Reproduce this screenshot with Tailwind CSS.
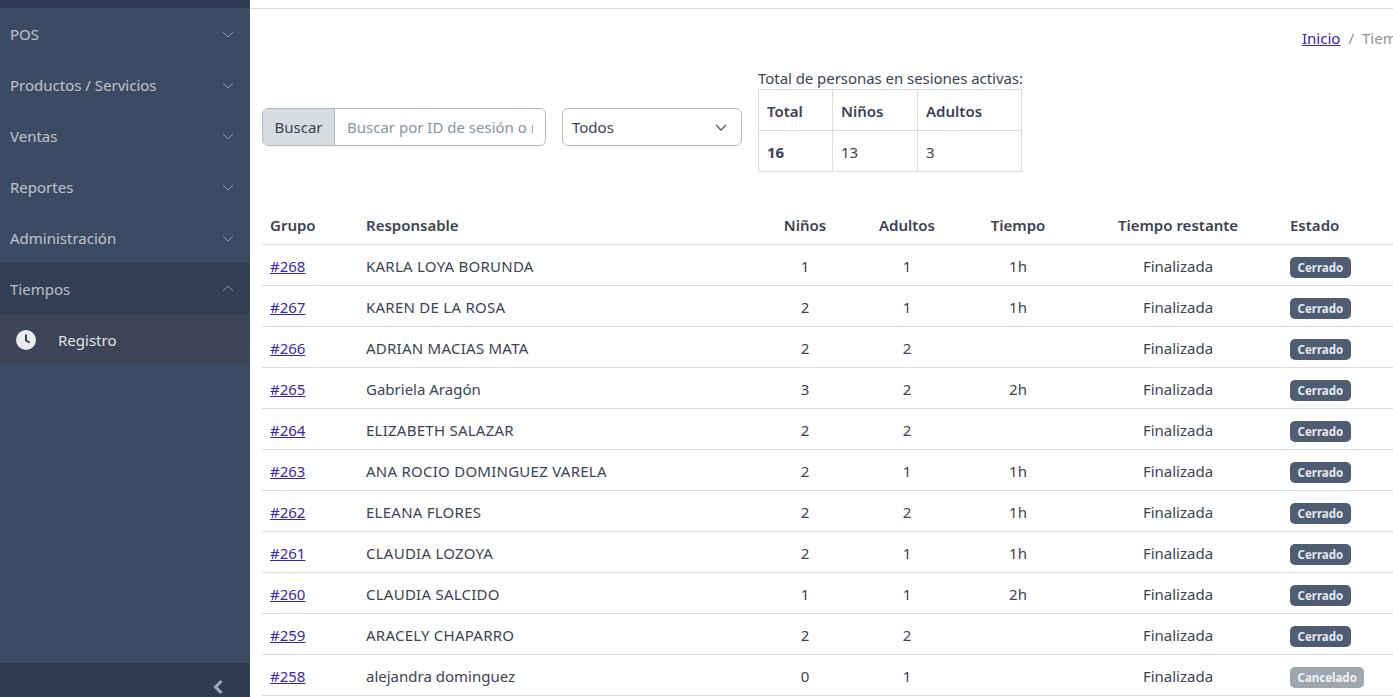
<!DOCTYPE html>
<html lang="es">
<head>
    <meta charset="UTF-8">
    <title>Tiempos</title>
    <script src="https://cdn.jsdelivr.net/npm/@tailwindcss/browser@4"></script>
</head>
<body class="h-[697px] overflow-hidden flex bg-white text-[15px] text-[#3c4352] font-['Noto_Sans',sans-serif]">
    <!-- sidebar -->
    <aside class="w-[250px] shrink-0 h-[697px] flex flex-col bg-[#3c4b64] text-white/65">
        <div class="h-2 bg-[#303c54]"></div>
        <nav class="flex-1">
            <a class="h-[51px] pl-[10px] pr-[10px] pt-[2px] flex items-center justify-between">POS
                <svg class="w-3 h-3 mr-[6px] mb-[2px] text-white/45" viewBox="0 0 12 12" fill="none" stroke="currentColor" stroke-width="1"><path d="M1 4l5 5 5-5"/></svg>
            </a>
            <a class="h-[51px] pl-[10px] pr-[10px] pt-[2px] flex items-center justify-between">Productos / Servicios
                <svg class="w-3 h-3 mr-[6px] mb-[2px] text-white/45" viewBox="0 0 12 12" fill="none" stroke="currentColor" stroke-width="1"><path d="M1 4l5 5 5-5"/></svg>
            </a>
            <a class="h-[51px] pl-[10px] pr-[10px] pt-[2px] flex items-center justify-between">Ventas
                <svg class="w-3 h-3 mr-[6px] mb-[2px] text-white/45" viewBox="0 0 12 12" fill="none" stroke="currentColor" stroke-width="1"><path d="M1 4l5 5 5-5"/></svg>
            </a>
            <a class="h-[51px] pl-[10px] pr-[10px] pt-[2px] flex items-center justify-between">Reportes
                <svg class="w-3 h-3 mr-[6px] mb-[2px] text-white/45" viewBox="0 0 12 12" fill="none" stroke="currentColor" stroke-width="1"><path d="M1 4l5 5 5-5"/></svg>
            </a>
            <a class="h-[51px] pl-[10px] pr-[10px] pt-[2px] flex items-center justify-between">Administración
                <svg class="w-3 h-3 mr-[6px] mb-[2px] text-white/45" viewBox="0 0 12 12" fill="none" stroke="currentColor" stroke-width="1"><path d="M1 4l5 5 5-5"/></svg>
            </a>
            <a class="h-[51px] pl-[10px] pr-[10px] pt-[2px] flex items-center justify-between bg-[#323e54]">Tiempos
                <svg class="w-3 h-3 mr-[6px] mb-[2px] text-white/45" viewBox="0 0 12 12" fill="none" stroke="currentColor" stroke-width="1"><path d="M1 8l5-5 5 5"/></svg>
            </a>
            <a class="h-[51px] pl-[16px] flex items-center bg-[#3b4556] text-white/85">
                <svg class="w-5 h-5 mr-[22px]" viewBox="0 0 20 20"><circle cx="10" cy="10" r="10" fill="#e9ebef"/><path d="M10 4.5v6l3.5 2.2" fill="none" stroke="#3b4556" stroke-width="2"/></svg>
                <span class="pt-[2px]">Registro</span>
            </a>
        </nav>
        <div class="h-[34px] bg-[#303c54] flex justify-end items-end pr-[26px] pb-[2px]">
            <svg class="w-3 h-4" viewBox="0 0 12 16" fill="none" stroke="#a3abb8" stroke-width="3"><path d="M9.5 2l-6 6 6 6"/></svg>
        </div>
    </aside>

    <main class="flex-1 min-w-0 overflow-hidden">
        <div class="h-[9px] border-b border-[#d8dbe0]"></div>
        <!-- breadcrumb -->
        <div class="h-[59px] pl-[1052px] flex items-center whitespace-nowrap">
            <a class="underline text-[#3726b8]">Inicio</a>
            <span class="mx-2 text-[#8d9199]">/</span>
            <span class="text-[#8d9199]">Tiempos</span>
        </div>
        <!-- filters -->
        <div class="pl-3 pt-px flex items-start h-[137px]">
            <div class="flex mt-[39px] w-[284px] h-[38px] border border-[#b1b7c1] rounded-md overflow-hidden">
                <span class="w-[72px] shrink-0 flex items-center justify-center bg-[#d8dbe0] border-r border-[#b1b7c1]">Buscar</span>
                <div class="flex-1 min-w-0 pl-3 pr-3 flex items-center"><span class="block overflow-hidden whitespace-nowrap text-[#8a93a2]">Buscar por ID de sesión o responsable</span></div>
            </div>
            <div class="ml-4 mt-[39px] w-[180px] h-[38px] pl-[9px] pr-[14px] border border-[#b1b7c1] rounded-md flex items-center justify-between">
                Todos
                <svg class="w-3 h-3" viewBox="0 0 12 12" fill="none" stroke="#4f5d73" stroke-width="1.4"><path d="M1 4l5 5 5-5"/></svg>
            </div>
            <div class="ml-4">
                <div class="h-[20px] leading-[19px] whitespace-nowrap tracking-[-0.05px]">Total de personas en sesiones activas:</div>
                <table class="border-collapse table-fixed w-[263px]">
                    <colgroup><col class="w-[74px]"><col class="w-[85px]"><col class="w-[104px]"></colgroup>
                    <tr class="h-[41px]">
                        <th class="border border-[#d8dbe0] px-2 pt-[2px] text-left font-semibold">Total</th>
                        <th class="border border-[#d8dbe0] px-2 pt-[2px] text-left font-semibold">Niños</th>
                        <th class="border border-[#d8dbe0] px-2 pt-[2px] text-left font-semibold">Adultos</th>
                    </tr>
                    <tr class="h-[41px]">
                        <td class="border border-[#d8dbe0] px-2 pt-[2px] font-bold">16</td>
                        <td class="border border-[#d8dbe0] px-2 pt-[2px]">13</td>
                        <td class="border border-[#d8dbe0] px-2 pt-[2px]">3</td>
                    </tr>
                </table>
            </div>
        </div>
        <!-- sessions table -->
        <div class="pl-3">
            <table class="border-collapse table-fixed w-[1160px]">
                <colgroup><col class="w-[96px]"><col class="w-[400px]"><col class="w-[94px]"><col class="w-[110px]"><col class="w-[112px]"><col class="w-[208px]"><col class="w-[140px]"></colgroup>
                <thead>
                    <tr class="h-[39px] border-b border-[#d8dbe0] font-semibold [&_th]:pt-px">
                        <th class="px-2 text-left font-semibold">Grupo</th>
                        <th class="px-2 text-left font-semibold">Responsable</th>
                        <th class="px-2 font-semibold">Niños</th>
                        <th class="px-2 font-semibold">Adultos</th>
                        <th class="px-2 font-semibold">Tiempo</th>
                        <th class="px-2 font-semibold">Tiempo restante</th>
                        <th class="px-2 text-left font-semibold">Estado</th>
                    </tr>
                </thead>
                <tbody class="text-center [&_td]:pt-[4px]">
                    <tr class="h-[41px] border-b border-[#d8dbe0]">
                        <td class="px-2 text-left"><a class="underline text-[#3726b8]">#268</a></td>
                        <td class="px-2 text-left tracking-[0.25px]">KARLA LOYA BORUNDA</td>
                        <td>1</td><td>1</td><td>1h</td><td>Finalizada</td>
                        <td class="px-2 text-left"><span class="inline-block px-[7.5px] h-[21px] leading-[21px] rounded-[5px] bg-[#4f5d73] text-white/85 text-[11.5px] font-bold">Cerrado</span></td>
                    </tr>
                    <tr class="h-[41px] border-b border-[#d8dbe0]">
                        <td class="px-2 text-left"><a class="underline text-[#3726b8]">#267</a></td>
                        <td class="px-2 text-left tracking-[0.25px]">KAREN DE LA ROSA</td>
                        <td>2</td><td>1</td><td>1h</td><td>Finalizada</td>
                        <td class="px-2 text-left"><span class="inline-block px-[7.5px] h-[21px] leading-[21px] rounded-[5px] bg-[#4f5d73] text-white/85 text-[11.5px] font-bold">Cerrado</span></td>
                    </tr>
                    <tr class="h-[41px] border-b border-[#d8dbe0]">
                        <td class="px-2 text-left"><a class="underline text-[#3726b8]">#266</a></td>
                        <td class="px-2 text-left tracking-[0.25px]">ADRIAN MACIAS MATA</td>
                        <td>2</td><td>2</td><td></td><td>Finalizada</td>
                        <td class="px-2 text-left"><span class="inline-block px-[7.5px] h-[21px] leading-[21px] rounded-[5px] bg-[#4f5d73] text-white/85 text-[11.5px] font-bold">Cerrado</span></td>
                    </tr>
                    <tr class="h-[41px] border-b border-[#d8dbe0]">
                        <td class="px-2 text-left"><a class="underline text-[#3726b8]">#265</a></td>
                        <td class="px-2 text-left">Gabriela Aragón</td>
                        <td>3</td><td>2</td><td>2h</td><td>Finalizada</td>
                        <td class="px-2 text-left"><span class="inline-block px-[7.5px] h-[21px] leading-[21px] rounded-[5px] bg-[#4f5d73] text-white/85 text-[11.5px] font-bold">Cerrado</span></td>
                    </tr>
                    <tr class="h-[41px] border-b border-[#d8dbe0]">
                        <td class="px-2 text-left"><a class="underline text-[#3726b8]">#264</a></td>
                        <td class="px-2 text-left tracking-[0.25px]">ELIZABETH SALAZAR</td>
                        <td>2</td><td>2</td><td></td><td>Finalizada</td>
                        <td class="px-2 text-left"><span class="inline-block px-[7.5px] h-[21px] leading-[21px] rounded-[5px] bg-[#4f5d73] text-white/85 text-[11.5px] font-bold">Cerrado</span></td>
                    </tr>
                    <tr class="h-[41px] border-b border-[#d8dbe0]">
                        <td class="px-2 text-left"><a class="underline text-[#3726b8]">#263</a></td>
                        <td class="px-2 text-left tracking-[0.25px]">ANA ROCIO DOMINGUEZ VARELA</td>
                        <td>2</td><td>1</td><td>1h</td><td>Finalizada</td>
                        <td class="px-2 text-left"><span class="inline-block px-[7.5px] h-[21px] leading-[21px] rounded-[5px] bg-[#4f5d73] text-white/85 text-[11.5px] font-bold">Cerrado</span></td>
                    </tr>
                    <tr class="h-[41px] border-b border-[#d8dbe0]">
                        <td class="px-2 text-left"><a class="underline text-[#3726b8]">#262</a></td>
                        <td class="px-2 text-left tracking-[0.25px]">ELEANA FLORES</td>
                        <td>2</td><td>2</td><td>1h</td><td>Finalizada</td>
                        <td class="px-2 text-left"><span class="inline-block px-[7.5px] h-[21px] leading-[21px] rounded-[5px] bg-[#4f5d73] text-white/85 text-[11.5px] font-bold">Cerrado</span></td>
                    </tr>
                    <tr class="h-[41px] border-b border-[#d8dbe0]">
                        <td class="px-2 text-left"><a class="underline text-[#3726b8]">#261</a></td>
                        <td class="px-2 text-left tracking-[0.25px]">CLAUDIA LOZOYA</td>
                        <td>2</td><td>1</td><td>1h</td><td>Finalizada</td>
                        <td class="px-2 text-left"><span class="inline-block px-[7.5px] h-[21px] leading-[21px] rounded-[5px] bg-[#4f5d73] text-white/85 text-[11.5px] font-bold">Cerrado</span></td>
                    </tr>
                    <tr class="h-[41px] border-b border-[#d8dbe0]">
                        <td class="px-2 text-left"><a class="underline text-[#3726b8]">#260</a></td>
                        <td class="px-2 text-left tracking-[0.25px]">CLAUDIA SALCIDO</td>
                        <td>1</td><td>1</td><td>2h</td><td>Finalizada</td>
                        <td class="px-2 text-left"><span class="inline-block px-[7.5px] h-[21px] leading-[21px] rounded-[5px] bg-[#4f5d73] text-white/85 text-[11.5px] font-bold">Cerrado</span></td>
                    </tr>
                    <tr class="h-[41px] border-b border-[#d8dbe0]">
                        <td class="px-2 text-left"><a class="underline text-[#3726b8]">#259</a></td>
                        <td class="px-2 text-left tracking-[0.25px]">ARACELY CHAPARRO</td>
                        <td>2</td><td>2</td><td></td><td>Finalizada</td>
                        <td class="px-2 text-left"><span class="inline-block px-[7.5px] h-[21px] leading-[21px] rounded-[5px] bg-[#4f5d73] text-white/85 text-[11.5px] font-bold">Cerrado</span></td>
                    </tr>
                    <tr class="h-[41px] border-b border-[#d8dbe0]">
                        <td class="px-2 text-left"><a class="underline text-[#3726b8]">#258</a></td>
                        <td class="px-2 text-left">alejandra dominguez</td>
                        <td>0</td><td>1</td><td></td><td>Finalizada</td>
                        <td class="px-2 text-left"><span class="inline-block px-[7.5px] h-[21px] leading-[21px] rounded-[5px] bg-[#9da5b1] text-white/85 text-[11.5px] font-bold">Cancelado</span></td>
                    </tr>
                </tbody>
            </table>
        </div>
    </main>
</body>
</html>
